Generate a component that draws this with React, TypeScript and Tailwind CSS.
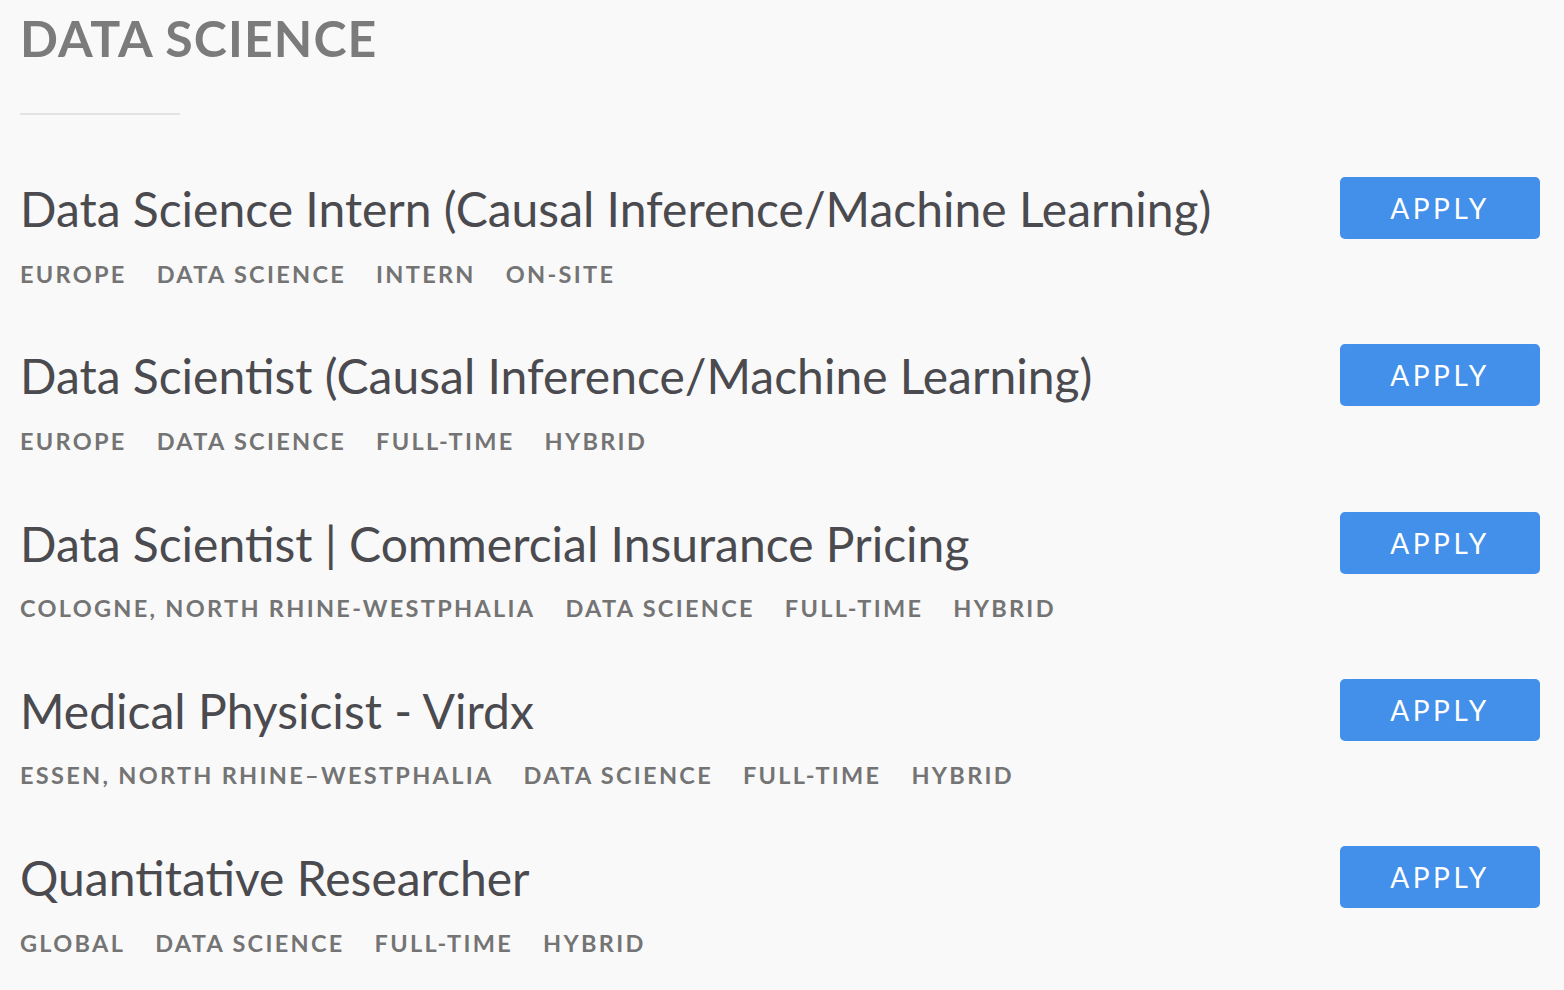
import React from "react";

const jobs = [
  {
    title: "Data Science Intern (Causal Inference/Machine Learning)",
    tags: ["EUROPE", "DATA SCIENCE", "INTERN", "ON-SITE"],
  },
  {
    title: "Data Scientist (Causal Inference/Machine Learning)",
    tags: ["EUROPE", "DATA SCIENCE", "FULL-TIME", "HYBRID"],
  },
  {
    title: "Data Scientist | Commercial Insurance Pricing",
    tags: ["COLOGNE, NORTH RHINE-WESTPHALIA", "DATA SCIENCE", "FULL-TIME", "HYBRID"],
  },
  {
    title: "Medical Physicist - Virdx",
    tags: ["ESSEN, NORTH RHINE\u2013WESTPHALIA", "DATA SCIENCE", "FULL-TIME", "HYBRID"],
  },
  {
    title: "Quantitative Researcher",
    tags: ["GLOBAL", "DATA SCIENCE", "FULL-TIME", "HYBRID"],
  },
];

export default function App() {
  return (
    <div
      className="min-h-[990px] w-full bg-[#f9f9f9] pl-[20px] pr-[24px] pt-[8px]"
      style={{ fontFamily: "Lato, 'Open Sans', sans-serif" }}
    >
      <h1 className="text-[50px] font-bold leading-[1.2] text-[#7b7b7b] tracking-[1.1px]">
        DATA SCIENCE
      </h1>
      <div className="mt-[45px] h-[2px] w-[160px] bg-[#e3e3e3]" />
      <div className="mt-[62px] flex flex-col gap-[56.5px]">
        {jobs.map((job) => (
          <div key={job.title} className="flex items-start justify-between">
            <div className="pt-[3px]">
              <div className="text-[48px] leading-[1.2] text-[#4a4a4f]">{job.title}</div>
              <div className="mt-[22px] flex gap-[30px] text-[23.5px] font-bold leading-[1.2] tracking-[2.3px] text-[#747474]">
                {job.tags.map((t, i) => (
                  <span key={i}>{t}</span>
                ))}
              </div>
            </div>
            <button className="flex h-[62px] w-[200px] shrink-0 items-center justify-center rounded-[5px] bg-[#4390ea] text-[28px] leading-none tracking-[3.5px] text-white">
              APPLY
            </button>
          </div>
        ))}
      </div>
    </div>
  );
}
